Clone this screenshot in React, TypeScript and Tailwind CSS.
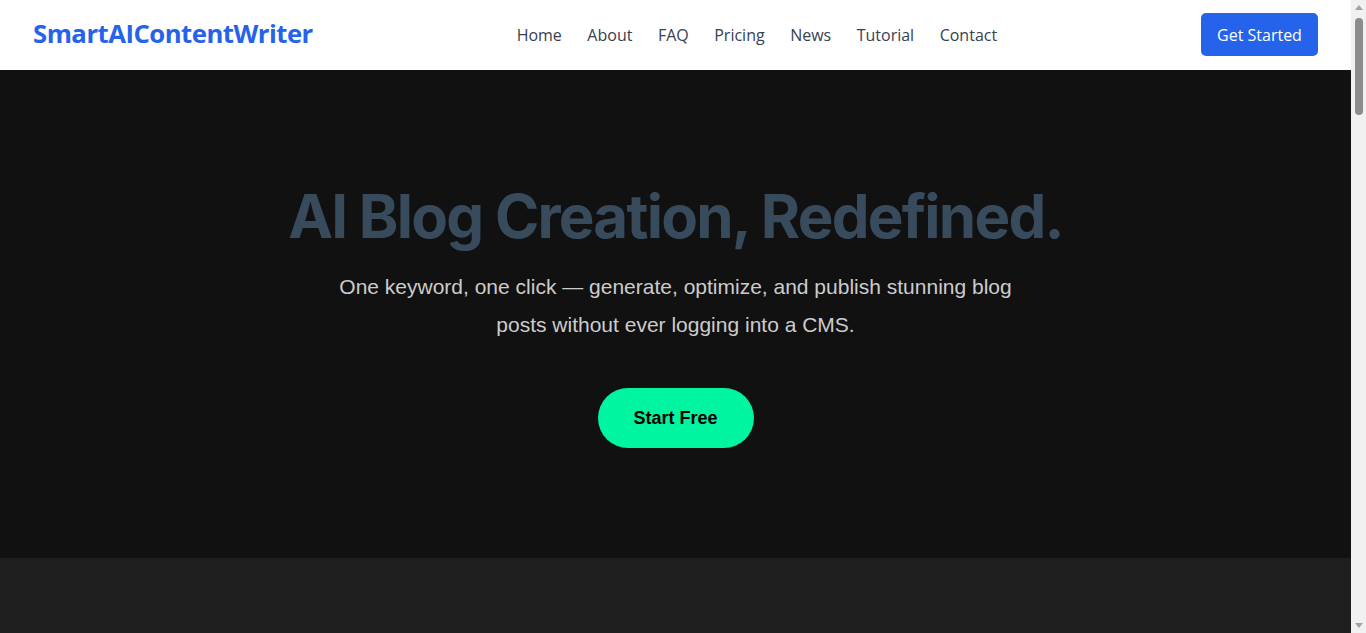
import React from "react";

export default function App() {
  const nav = ["Home", "About", "FAQ", "Pricing", "News", "Tutorial", "Contact"];
  return (
    <div className="flex h-[633px] overflow-hidden bg-[#1e1e1e]">
      <div className="flex-1 min-w-0">
        <header
          className="h-[70px] bg-white flex items-center justify-between pl-[33px] pr-[33px] pb-[1px]"
          style={{ fontFamily: '"Open Sans", sans-serif' }}
        >
          <div className="text-[25.7px] font-bold text-[#2563eb] tracking-[-0.5px]">SmartAIContentWriter</div>
          <nav className="flex items-center gap-[25.5px] text-[16px] text-[#374151]">
            {nav.map((n) => (
              <a key={n} href="#">{n}</a>
            ))}
          </nav>
          <button className="h-[43px] w-[117px] rounded-[5px] bg-[#2563eb] text-white text-[16px]">Get Started</button>
        </header>
        <section className="bg-[#111111] h-[488px] flex flex-col items-center pt-[110px]">
          <h1
            className="text-[60px] leading-[72px] font-bold text-[#384b5d] tracking-[-1.75px]"
            style={{ fontFamily: 'Inter, sans-serif' }}
          >
            AI Blog Creation, Redefined.
          </h1>
          <p
            className="mt-[16px] max-w-[700px] text-center text-[21px] leading-[38px] text-[#cccccc]"
            style={{ fontFamily: '"Liberation Sans", Arial, sans-serif' }}
          >
            One keyword, one click — generate, optimize, and publish stunning blog posts without ever logging into a CMS.
          </p>
          <button
            className="mt-[44px] h-[60px] w-[156px] rounded-full bg-[#00f5a0] text-black text-[18px] font-bold"
            style={{ fontFamily: '"Liberation Sans", Arial, sans-serif' }}
          >
            Start Free
          </button>
        </section>
        <section className="h-[600px] bg-[#1e1e1e]" />
      </div>
      <div className="w-[15px] shrink-0 bg-[#f1f1f1] flex flex-col items-center">
        <div className="mt-[5px] w-0 h-0 border-l-[4px] border-r-[4px] border-b-[5px] border-l-transparent border-r-transparent border-b-[#a3a3a3]" />
        <div className="mt-[8px] h-[97px] w-[8px] rounded-full bg-[#8c8c8c]" />
        <div className="flex-1" />
        <div className="mb-[5px] w-0 h-0 border-l-[4px] border-r-[4px] border-t-[5px] border-l-transparent border-r-transparent border-t-[#a3a3a3]" />
      </div>
    </div>
  );
}
